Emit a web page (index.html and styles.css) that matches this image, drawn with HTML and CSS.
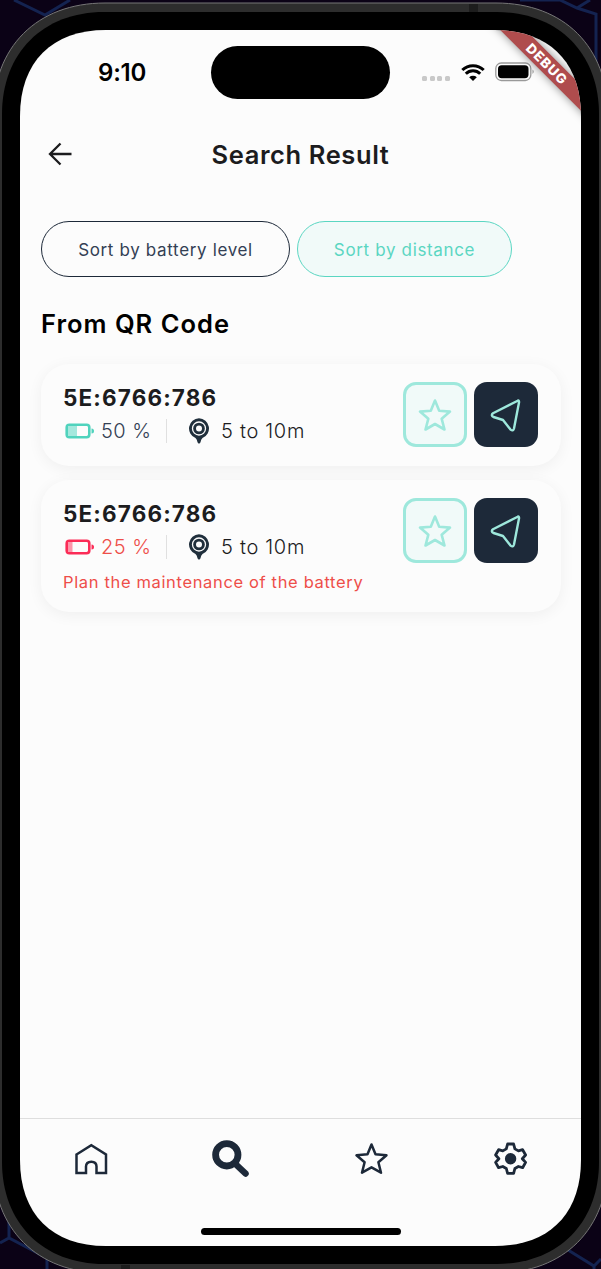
FILE: index.html
```html
<!DOCTYPE html>
<html lang="en">
<head>
<meta charset="utf-8">
<title>Search Result</title>
<link rel="stylesheet" href="styles.css">
</head>
<body>
<svg class="device" viewBox="0 0 601 1269" aria-hidden="true">
  <rect width="601" height="1269" fill="#0b0216"/>
  <g fill="none" stroke="#142350" stroke-width="3">
    <path d="M14 0 45 15 70 0M520 0 560 0 577 8 596 14V62M577 8 590 0M0 1243 9 1238 47 1258V1269M9 1238V1200M568 1250 594 1266 601 1259M594 1266V1269"/>
  </g>
  <path fill="#2d2d2d" stroke="#777" stroke-width="1" d="M105 3H496C564 3 608 47 608 115V1161C608 1229 564 1273 496 1273H105C37 1273 -7 1229 -7 1161V115C-7 47 37 3 105 3Z"/>
  <path fill="#1d1d1d" d="M469 4h9v8h-9zM121 1265h9v4h-9z"/>
  <path d="M104 12H497C558 12 599 53 599 114V1162C599 1223 558 1264 497 1264H104C43 1264 2 1223 2 1162V114C2 53 43 12 104 12Z"/>
</svg>

<svg class="symbols" aria-hidden="true">
  <symbol id="star" viewBox="0 0 34 34"><path d="M17 2.500 21.200 12.800 32 13.600 23.700 20.800 26.500 31.500 17 26 7.500 31.500 10.300 20.800 2 13.600 12.800 12.800Z" fill="none" stroke="currentColor" stroke-width="2.600" stroke-linejoin="round"/></symbol>
  <symbol id="send" viewBox="0 0 34 36"><path d="M28.700 3.700 4 16.300Q1.500 18.300 4.500 20L14 23 21.500 32.600Q24.200 34.600 25 31.500L30 5.600Q30.300 3 28.700 3.700Z" fill="none" stroke="currentColor" stroke-width="2.400" stroke-linejoin="round"/></symbol>
  <symbol id="pin" viewBox="0 0 22 26"><path d="M11 .3A10.200 10.200 0 0 0 7.500 20Q9 21 9.600 24.500 11 26.800 12.400 24.500 13 21 14.500 20A10.200 10.200 0 0 0 11 .3Z" fill="#202f3c"/><circle cx="11" cy="10.500" r="6.500" fill="none" stroke="#fcfcfc" stroke-width="1.300"/><circle cx="11" cy="10.500" r="3" fill="#fcfcfc"/></symbol>
</svg>

<main class="screen">
  <header class="status">
    <span class="time">9:10</span>
    <span class="island"></span>
    <span class="signals">
      <span class="dots"><i></i><i></i><i></i><i></i></span>
      <svg class="wifi" viewBox="0 0 24 18"><path d="M12 18 8.200 14.200A5.600 5.600 0 0 1 15.800 14.200Z"/><g fill="none" stroke="#000" stroke-width="3"><path d="M4.800 10.800A10.300 10.300 0 0 1 19.200 10.800M1.300 7A15.400 15.400 0 0 1 22.700 7"/></g></svg>
      <svg class="battery" viewBox="0 0 40 20"><rect x=".8" y="1" width="35" height="17.500" rx="5.500" fill="none" stroke="#999" stroke-width="1.300"/><rect x="3" y="3.300" width="30.500" height="13" rx="3.700"/><path d="M37.500 7.500Q40 9.700 37.500 12Z" fill="#999"/></svg>
    </span>
  </header>
  <div class="debug"><span>DEBUG</span></div>

  <div class="titlebar">
    <svg class="back" viewBox="0 0 24 24"><path d="M12.500 1.500 2 12 12.500 22.500M2 12H23.500" fill="none" stroke="#1c1c1e" stroke-width="2.300"/></svg>
    <h1>Search Result</h1>
  </div>

  <div class="filters">
    <button class="filter filter-level">Sort by battery level</button>
    <button class="filter filter-active">Sort by distance</button>
  </div>
  <h2>From QR Code</h2>

  <section class="cards">
    <article class="card">
      <div class="info">
        <h3>5E:6766:786</h3>
        <div class="meta">
          <svg class="level" viewBox="0 0 30 16"><rect x="1.700" y="1.700" width="22.600" height="12.600" rx="2.700" fill="none" stroke="#50d3bd" stroke-width="2.600"/><path d="M3 3H12V13H3Z" fill="#a4e8dd"/><path d="M26.500 5.500Q29 5.500 29 8T26.500 10.500Z" fill="#50d3bd"/></svg>
          <span class="percent">50 %</span>
          <span class="divider"></span>
          <svg class="pin"><use href="#pin"/></svg>
          <span class="distance">5 to 10m</span>
        </div>
      </div>
      <div class="actions">
        <button class="action favorite"><svg><use href="#star"/></svg></button>
        <button class="action locate"><svg><use href="#send"/></svg></button>
      </div>
    </article>
    <article class="card card-alert">
      <div class="info">
        <h3>5E:6766:786</h3>
        <div class="meta">
          <svg class="level" viewBox="0 0 30 16"><rect x="1.700" y="1.700" width="22.600" height="12.600" rx="2.700" fill="none" stroke="#fb2c57" stroke-width="2.600"/><path d="M3 3H7.500V13H3Z" fill="#fd96ab"/><path d="M26.500 5.500Q29 5.500 29 8T26.500 10.500Z" fill="#fb2c57"/></svg>
          <span class="percent low">25 %</span>
          <span class="divider"></span>
          <svg class="pin"><use href="#pin"/></svg>
          <span class="distance">5 to 10m</span>
        </div>
        <p class="warning">Plan the maintenance of the battery</p>
      </div>
      <div class="actions">
        <button class="action favorite"><svg><use href="#star"/></svg></button>
        <button class="action locate"><svg><use href="#send"/></svg></button>
      </div>
    </article>
  </section>

  <nav class="tabs">
    <svg class="tab" viewBox="0 0 40 40"><path d="M5.500 15.500 20.300 6.200 35 15.500V34H25.500V27.500Q25.500 22.700 20.300 22.700T15 27.500V34H5.500Z" fill="none" stroke="#1d2939" stroke-width="2.500"/></svg>
    <svg class="tab" viewBox="0 0 40 40"><circle cx="15.800" cy="15.800" r="11.200" fill="none" stroke="#1d2939" stroke-width="6.800"/><path d="M25 25.500 34.500 34.500" stroke="#1d2939" stroke-width="6.500" stroke-linecap="round"/></svg>
    <svg class="tab" viewBox="0 0 40 40"><path d="M21.500 5.500 25.500 15.300 36.500 16.200 28.400 23.200 31 33.700 21.500 28.300 12 33.700 14.600 23.200 6.500 16.200 17.500 15.300Z" fill="none" stroke="#1d2939" stroke-width="2.500" stroke-linejoin="round"/></svg>
    <svg class="tab" viewBox="0 0 40 40"><path transform="translate(.6 -.3)" d="M17 5.300H23L24.300 10.200 27.800 12.200 32 11 35 16.300 31.700 20 35 23.700 32 29 27.800 27.800 24.300 29.800 23 34.700H17L15.700 29.800 12.200 27.800 8 29 5 23.700 8.300 20 5 16.300 8 11 12.200 12.200 15.700 10.200Z" fill="none" stroke="#1d2939" stroke-width="2.800" stroke-linejoin="round"/><circle cx="20.600" cy="19.700" r="5.700" fill="#1d2939"/></svg>
  </nav>
  <div class="home-indicator"></div>
</main>
</body>
</html>
```
FILE: styles.css
```css
* { box-sizing: border-box; }
body {
  margin: 0;
  padding: 30px 20px 23px;
  width: 601px;
  height: 1269px;
  overflow: hidden;
  font-family: Inter, "Liberation Sans", sans-serif;
  color: #1c1c1e;
  background: #000;
}
h1, h2, h3, p { margin: 0; white-space: nowrap; }
button { font: inherit; padding: 0; }
svg { display: block; flex: none; }
.device { position: absolute; left: 0; top: 0; width: 601px; height: 1269px; }
.symbols { position: absolute; width: 0; height: 0; }
.screen {
  position: relative;
  display: flex;
  flex-direction: column;
  width: 561px;
  height: 1216px;
  background: #fcfcfc;
  clip-path: path("M86 0H475C529 0 561 32 561 86V1130C561 1184 529 1216 475 1216H86C32 1216 0 1184 0 1130V86C0 32 32 0 86 0Z");
}
.status {
  display: grid;
  grid-template-columns: 191px 179px 1fr;
  align-items: center;
  height: 84px;
}
.time {
  padding-left: 78px;
  color: #000;
  font-size: 24px;
  font-weight: 600;
  letter-spacing: -0.2px;
}
.island { height: 53px; border-radius: 27px; background: #000; }
.signals { display: flex; align-items: center; padding-left: 32px; }
.dots { display: flex; gap: 2.600px; padding-top: 12px; margin-right: 11px; }
.dots i { width: 5px; height: 5px; border-radius: 1.500px; background: #c9c9c9; }
.wifi { width: 24px; height: 18px; margin-right: 10px; }
.battery { width: 40px; height: 20px; }
.debug {
  position: absolute;
  right: -66px;
  top: 25px;
  width: 200px;
  height: 18px;
  transform: rotate(45deg);
  background: #af4c4d;
  box-shadow: 0 0 10px rgba(0, 0, 0, .45);
  color: #fff;
  font-size: 13.500px;
  font-weight: 800;
  letter-spacing: 1px;
  line-height: 18px;
  text-align: center;
}
.titlebar {
  display: grid;
  grid-template-columns: 28px 1fr 28px;
  align-items: center;
  height: 80px;
  padding: 0 28px;
}
.back { width: 24px; height: 24px; }
h1 { padding-top: 1px; font-size: 25.500px; font-weight: 600; letter-spacing: .600px; text-align: center; }
.filters { display: flex; gap: 7px; padding: 27px 21px 0; }
.filter {
  height: 56px;
  padding-top: 1px;
  border: 1.500px solid #1d2939;
  border-radius: 28px;
  background: transparent;
  color: #334054;
  font-size: 17px;
  font-weight: 400;
  letter-spacing: .650px;
  white-space: nowrap;
}
.filter-level { width: 249px; }
.filter-active { width: 215px; border-color: #5bd6c2; background: #f1faf9; color: #5bd6c2; }
h2 {
  padding: 31px 21px 0;
  color: #000;
  font-size: 25.500px;
  font-weight: 600;
  line-height: 32px;
  letter-spacing: 1px;
}
.cards { display: flex; flex-direction: column; gap: 14px; padding: 24px 20px 0 21px; }
.card {
  display: flex;
  justify-content: space-between;
  height: 102px;
  padding: 18px 23px 0 22px;
  border-radius: 28px;
  background: #fcfcfc;
  box-shadow: 0 3px 15px rgba(0, 0, 0, .055);
}
.card-alert { height: 132px; }
h3 { font-size: 22.500px; font-weight: 650; line-height: 31px; letter-spacing: 1.150px; }
.meta { display: flex; align-items: center; height: 36px; }
.level { width: 30px; height: 16px; margin-left: 2px; }
.percent { width: 65px; padding-left: 6px; color: #344054; font-size: 20px; font-weight: 350; letter-spacing: .5px; }
.low, .warning { color: #ee4e49; }
.divider { width: 1px; height: 24px; margin: 0 21px 0 6px; background: #e0e0e0; }
.pin { width: 22px; height: 26px; }
.distance { padding-left: 11px; font-size: 20px; font-weight: 350; letter-spacing: .7px; }
.warning { font-size: 16.500px; line-height: 34px; letter-spacing: .650px; }
.actions { display: flex; gap: 7px; }
.action {
  display: grid;
  place-items: center;
  width: 64px;
  height: 65px;
  border: 0;
  border-radius: 13px;
  color: #9ee8dc;
}
.action svg { width: 34px; height: 36px; }
.favorite { border: 3px solid #9ee8dc; background: #f1faf9; }
.locate { background: #1d2939; }
.tabs {
  display: flex;
  justify-content: space-between;
  height: 111px;
  margin-top: auto;
  padding: 20px 51px 0;
  border-top: 1.500px solid #dedede;
}
.tab { width: 40px; height: 40px; }
.home-indicator { width: 200px; height: 7px; margin: -1px auto 11px; border-radius: 4px; background: #000; }
```
